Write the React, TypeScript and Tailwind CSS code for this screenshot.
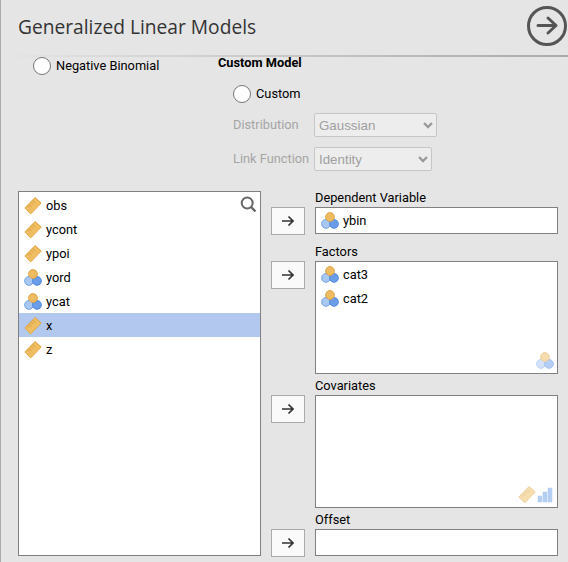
import React from "react";

type Kind = "continuous" | "nominal";
type Variable = { name: string; kind: Kind };

const available: Variable[] = [
  { name: "obs", kind: "continuous" },
  { name: "ycont", kind: "continuous" },
  { name: "ypoi", kind: "continuous" },
  { name: "yord", kind: "nominal" },
  { name: "ycat", kind: "nominal" },
  { name: "x", kind: "continuous" },
  { name: "z", kind: "continuous" },
];

function Ruler() {
  return (
    <svg width="18" height="18" viewBox="0 0 18 18" className="block shrink-0">
      <path d="M0.900 11 11.100 0.500 17.200 6 6.700 16.900Z" fill="#f0be62" stroke="#e0a440" strokeLinejoin="round" />
      <path d="M3.400 9l1.700 1.700M5 7.300l2.400 2.400M7 5.300l1.700 1.700M8.800 3.400l2.400 2.400" stroke="#cf9336" strokeWidth="1" fill="none" />
    </svg>
  );
}

function Circles() {
  return (
    <svg width="18" height="18" viewBox="0 0 18 18" className="block shrink-0">
      <circle cx="5" cy="11.900" r="4.400" fill="#a9c7f3" stroke="#6a9ce4" strokeWidth="0.9" />
      <circle cx="13" cy="11.900" r="4.400" fill="#6a9ce8" stroke="#4c87df" strokeWidth="0.9" />
      <circle cx="9" cy="5" r="4.400" fill="#eebc60" stroke="#d99f3e" strokeWidth="0.9" />
    </svg>
  );
}

function Bars() {
  return (
    <svg width="16" height="16" viewBox="0 0 16 16" className="block shrink-0">
      <path d="M1 9h4v6H1zM6 5h4v10H6zM11 1h4v14h-4z" fill="#6b9eea" stroke="#6b9eea" strokeWidth="0.5" />
    </svg>
  );
}

function Row({ item, selected, className = "" }: { item: Variable; selected?: boolean; className?: string }) {
  return (
    <div className={`flex h-6 items-center gap-1 pl-[5px] ${selected ? "bg-[#b3c8ef]" : ""} ${className}`}>
      {item.kind === "continuous" ? <Ruler /> : <Circles />}
      <span className="leading-6">{item.name}</span>
    </div>
  );
}

function Radio({ label }: { label: string }) {
  return (
    <div className="flex h-[18px] items-center gap-[5px]">
      <span className="h-[18px] w-[18px] shrink-0 rounded-full border border-[#777] bg-white" />
      <span className="leading-[18px]">{label}</span>
    </div>
  );
}

function Select({ value, width }: { value: string; width: string }) {
  return (
    <div
      className={`flex h-6 items-center justify-between rounded-[2px] border border-[#c6c6c6] bg-[#ededed] pr-[3px] pl-1 font-['Liberation_Sans',sans-serif] text-[13.333px] text-[#a0a0a0] ${width}`}
    >
      <span className="pt-px">{value}</span>
      <svg width="10" height="8" viewBox="0 0 10 8" className="block">
        <path d="M1 2 5 6 9 2" fill="none" stroke="#999" strokeWidth="2.300" />
      </svg>
    </div>
  );
}

function Target({
  label,
  height,
  items,
  children,
}: {
  label: string;
  height: string;
  items?: Variable[];
  children?: React.ReactNode;
}) {
  return (
    <section className="flex items-start">
      <button className="mt-4 flex h-7 w-[34px] shrink-0 items-center justify-center border border-[#aaa] bg-[#fafafa]">
        <svg width="14" height="12" viewBox="0 0 14 12" className="block">
          <path d="M1 6h11M7.500 1.500 12 6l-4.500 4.500" fill="none" stroke="#333" strokeWidth="1.700" />
        </svg>
      </button>
      <div className="ml-2.5 w-[243px]">
        <div className="h-4 leading-[14px]">{label}</div>
        <div className={`relative border border-[#808080] bg-white pt-px ${height}`}>
          {items?.map((item) => <Row key={item.name} item={item} />)}
          <div className="absolute right-[3px] bottom-[3px] flex items-center opacity-50">{children}</div>
        </div>
      </div>
    </section>
  );
}

export default function App() {
  return (
    <main className="h-[562px] w-[568px] overflow-hidden border-l border-[#aaa] bg-[#e5e5e5] font-[Roboto,sans-serif] text-[12.8px] text-black">
      <header className="flex h-[55px] items-start justify-between pl-[17px]">
        <h1 className="mt-[13px] font-['Open_Sans','Noto_Sans',sans-serif] text-[19.2px] leading-7 text-[#333]">Generalized Linear Models</h1>
        <svg width="42" height="42" viewBox="0 0 42 42" className="mt-[5px] block shrink-0">
          <circle cx="21" cy="21" r="18.500" fill="none" stroke="#555" strokeWidth="3" />
          <path d="M12 20.500h18M22 13l8 7.500-8 7.500" fill="none" stroke="#555" strokeWidth="3" strokeLinecap="round" strokeLinejoin="round" />
        </svg>
      </header>
      <div className="h-0.5 bg-linear-to-r from-[#e5e5e5] to-[#aaa]" />
      <div className="flex h-[134px]">
        <div className="w-[217px] pl-8">
          <Radio label="Negative Binomial" />
        </div>
        <div>
          <h2 className="h-7 text-[12.8px] leading-3 font-bold">Custom Model</h2>
          <div className="pl-[15px]">
            <Radio label="Custom" />
            <div className="mt-2.5 flex text-[#a5a5a5]">
              <span className="w-[81px] leading-6">Distribution</span>
              <Select value="Gaussian" width="w-[123px]" />
            </div>
            <div className="mt-2.5 flex text-[#a5a5a5]">
              <span className="w-[81px] whitespace-nowrap leading-6">Link Function</span>
              <Select value="Identity" width="w-[118px]" />
            </div>
          </div>
        </div>
      </div>
      <div className="flex pl-[17px]">
        <div className="relative h-[365px] w-[243px] border border-[#808080] bg-white pt-px">
          {available.map((item) => (
            <Row key={item.name} item={item} selected={item.name === "x"} className="pt-0.5" />
          ))}
          <svg width="18" height="18" viewBox="0 0 18 18" className="absolute top-1 right-0.5">
            <circle cx="7.200" cy="7" r="5.500" fill="none" stroke="#666" strokeWidth="2" />
            <path d="m11 11 4.500 4.500" stroke="#666" strokeWidth="2.400" />
          </svg>
        </div>
        <div className="ml-2.5 flex flex-col">
          <Target label="Dependent Variable" height="h-[27px]" items={[{ name: "ybin", kind: "nominal" }]} />
          <div className="mt-[10px]">
            <Target
              label="Factors"
              height="h-[113px]"
              items={[
                { name: "cat3", kind: "nominal" },
                { name: "cat2", kind: "nominal" },
              ]}
            >
              <Circles />
            </Target>
          </div>
          <div className="mt-[5px]">
            <Target label="Covariates" height="h-[113px]">
              <div className="flex items-center gap-px pr-px">
                <Ruler />
                <Bars />
              </div>
            </Target>
          </div>
          <div className="mt-[5px]">
            <Target label="Offset" height="h-[27px]" />
          </div>
        </div>
      </div>
    </main>
  );
}
